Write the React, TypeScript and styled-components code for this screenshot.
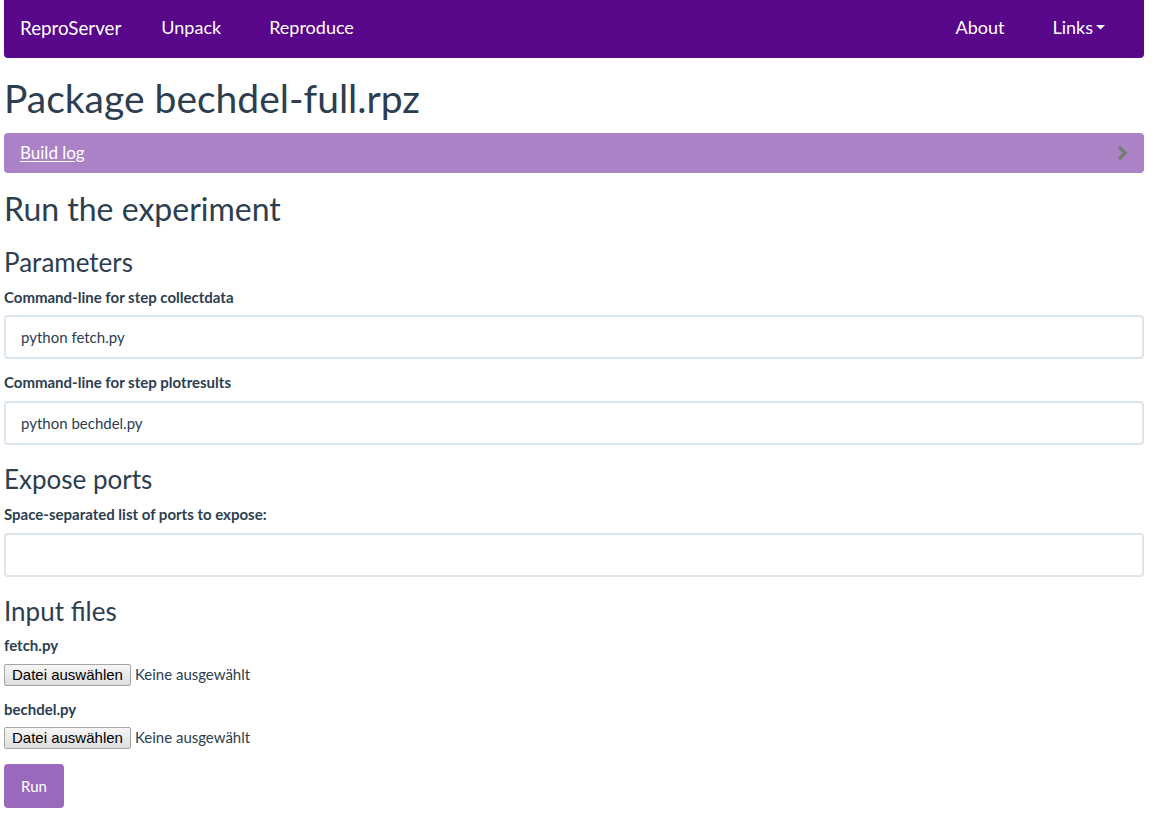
import { createGlobalStyle } from "styled-components";
import styled from "styled-components";

const GlobalStyle = createGlobalStyle`
  html, body {
    margin: 0;
    padding: 0;
    background: #ffffff;
  }
  body {
    font-family: Lato, "Open Sans", sans-serif;
    font-size: 15px;
    line-height: 1.42857;
    color: #2c3e50;
  }
  * {
    box-sizing: border-box;
  }
`;

const Page = styled.div`
  width: 1140px;
  margin: 0 4px;
  padding-bottom: 10px;
`;

const Navbar = styled.nav`
  height: 58px;
  background: #58068a;
  border-radius: 0 0 4px 4px;
  display: flex;
  align-items: center;
  justify-content: space-between;
  padding: 0 15px 2px 0;
  color: #ffffff;
  font-size: 18px;
`;

const NavGroup = styled.div`
  display: flex;
  align-items: center;
`;

const Brand = styled.a`
  padding: 0 16px;
  color: #ffffff;
  text-decoration: none;
  font-size: 18.75px;
`;

const NavLink = styled.a`
  padding: 0 24px;
  color: #ffffff;
  text-decoration: none;
  display: flex;
  align-items: center;
  gap: 3px;
`;

const Title = styled.h1`
  font-size: 39px;
  font-weight: 400;
  line-height: 1.1;
  margin: 19px 0 13px;
`;

const Panel = styled.div`
  height: 40px;
  background: #ab82c5;
  border-radius: 4px;
  display: flex;
  align-items: center;
  justify-content: space-between;
  padding: 0 16px;
`;

const PanelLink = styled.a`
  color: #ffffff;
  font-size: 17px;
  text-decoration: underline;
  text-underline-offset: 2px;
`;

const H2 = styled.h2`
  font-size: 32px;
  font-weight: 400;
  line-height: 1.1;
  margin: 18px 0 22px;
`;

const H3 = styled.h3<{ $top?: number; $bottom?: number }>`
  font-size: 26px;
  font-weight: 400;
  line-height: 1.1;
  margin: ${(p) => p.$top ?? 20}px 0 ${(p) => p.$bottom ?? 10}px;
`;

const Group = styled.div<{ $gap?: number }>`
  margin-bottom: ${(p) => p.$gap ?? 13}px;
`;

const Label = styled.label<{ $after?: number }>`
  display: block;
  font-weight: 700;
  font-size: 15px;
  margin-bottom: ${(p) => p.$after ?? 7}px;
`;

const TextInput = styled.input`
  display: block;
  width: 100%;
  height: 44px;
  border: 2px solid #dce4ec;
  border-radius: 4px;
  padding: 0 15px;
  font-family: Lato, sans-serif;
  font-size: 15px;
  color: #2c3e50;
  background: #ffffff;
  outline: none;
`;

const FileRow = styled.div`
  display: flex;
  align-items: center;
  gap: 4px;
  height: 22px;
`;

const FileButton = styled.button`
  height: 22px;
  padding: 0 7px;
  font-family: "Liberation Sans", Arial, sans-serif;
  font-size: 15px;
  color: #000000;
  background: linear-gradient(#f6f6f6, #dedede);
  border: 1px solid #a6a6a6;
  border-radius: 2px;
`;

const FileName = styled.span`
  font-size: 15px;
`;

const RunButton = styled.button`
  width: 60px;
  height: 44px;
  background: #9b69bb;
  color: #ffffff;
  border: none;
  border-radius: 4px;
  font-family: Lato, sans-serif;
  font-size: 15px;
  margin-top: 15px;
`;

const Chevron = () => (
  <svg width="12" height="16" viewBox="0 0 12 16">
    <polyline points="3,2 9,8 3,14" fill="none" stroke="#727e74" strokeWidth="3.4" />
  </svg>
);

const Caret = () => (
  <svg width="9" height="5" viewBox="0 0 9 5">
    <polygon points="0,0 9,0 4.5,4.5" fill="#ffffff" />
  </svg>
);

export default function App() {
  return (
    <>
      <GlobalStyle />
      <Page>
        <Navbar>
          <NavGroup>
            <Brand>ReproServer</Brand>
            <NavLink>Unpack</NavLink>
            <NavLink>Reproduce</NavLink>
          </NavGroup>
          <NavGroup>
            <NavLink>About</NavLink>
            <NavLink>
              Links
              <Caret />
            </NavLink>
          </NavGroup>
        </Navbar>

        <Title>Package bechdel-full.rpz</Title>

        <Panel>
          <PanelLink>Build log</PanelLink>
          <Chevron />
        </Panel>

        <H2>Run the experiment</H2>

        <H3 $top={0}>Parameters</H3>
        <Group>
          <Label>Command-line for step collectdata</Label>
          <TextInput defaultValue="python fetch.py" />
        </Group>
        <Group>
          <Label>Command-line for step plotresults</Label>
          <TextInput defaultValue="python bechdel.py" />
        </Group>

        <H3 $top={20} $bottom={11}>Expose ports</H3>
        <Group>
          <Label>Space-separated list of ports to expose:</Label>
          <TextInput defaultValue="" />
        </Group>

        <H3 $top={20}>Input files</H3>
        <Group $gap={13}>
          <Label>fetch.py</Label>
          <FileRow>
            <FileButton>Datei auswählen</FileButton>
            <FileName>Keine ausgewählt</FileName>
          </FileRow>
        </Group>
        <Group $gap={0}>
          <Label>bechdel.py</Label>
          <FileRow>
            <FileButton>Datei auswählen</FileButton>
            <FileName>Keine ausgewählt</FileName>
          </FileRow>
        </Group>

        <RunButton>Run</RunButton>
      </Page>
    </>
  );
}
